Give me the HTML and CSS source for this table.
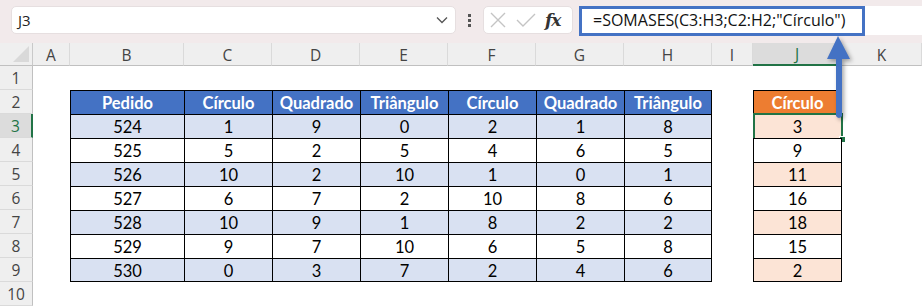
FILE: index.html
```html
<!DOCTYPE html>
<html lang="pt">
<head>
<meta charset="utf-8">
<title>SOMASES</title>
<link rel="stylesheet" href="styles.css">
</head>
<body>
<div class="toolbar">
  <div class="namebox">
    <span class="ref">J3</span>
    <svg class="chev" width="12" height="8" viewBox="0 0 12 8"><path d="M1 1.5 L6 6.5 L11 1.5" fill="none" stroke="#555" stroke-width="1.3"/></svg>
  </div>
  <div class="dots"><i></i><i></i><i></i></div>
  <div class="fxbox">
    <svg width="18" height="18" viewBox="0 0 18 18"><path d="M2 2 L16 16 M16 2 L2 16" stroke="#c4c4c4" stroke-width="1.4" fill="none"/></svg>
    <svg width="20" height="18" viewBox="0 0 20 18"><path d="M1 9 L7 15 L19 3" stroke="#c4c4c4" stroke-width="1.4" fill="none"/></svg>
    <span class="fx">fx</span>
  </div>
  <div class="formulaarea">
    <div class="formula">=SOMASES(C3:H3;C2:H2;"Círculo")</div>
  </div>
</div>

<div class="sheet">
  <div class="corner"><span class="tri"></span></div>
  <div class="ch">A</div><div class="ch">B</div><div class="ch">C</div><div class="ch">D</div><div class="ch">E</div><div class="ch">F</div><div class="ch">G</div><div class="ch">H</div><div class="ch">I</div><div class="ch sel">J</div><div class="ch">K</div>

  <div class="rh">1</div>

  <div class="rh">2</div>
  <div class="c th cb">Pedido</div><div class="c th">Círculo</div><div class="c th">Quadrado</div><div class="c th">Triângulo</div><div class="c th">Círculo</div><div class="c th">Quadrado</div><div class="c th lc">Triângulo</div>
  <div class="c oh cj lc">Círculo</div>

  <div class="rh sel">3</div>
  <div class="c b cb">524</div><div class="c b">1</div><div class="c b">9</div><div class="c b">0</div><div class="c b">2</div><div class="c b">1</div><div class="c b lc">8</div>
  <div class="c o cj lc active">3<span class="selbox"></span><span class="handle"></span></div>

  <div class="rh">4</div>
  <div class="c cb">525</div><div class="c">5</div><div class="c">2</div><div class="c">5</div><div class="c">4</div><div class="c">6</div><div class="c lc">5</div>
  <div class="c cj lc">9</div>

  <div class="rh">5</div>
  <div class="c b cb">526</div><div class="c b">10</div><div class="c b">2</div><div class="c b">10</div><div class="c b">1</div><div class="c b">0</div><div class="c b lc">1</div>
  <div class="c o cj lc">11</div>

  <div class="rh">6</div>
  <div class="c cb">527</div><div class="c">6</div><div class="c">7</div><div class="c">2</div><div class="c">10</div><div class="c">8</div><div class="c lc">6</div>
  <div class="c cj lc">16</div>

  <div class="rh">7</div>
  <div class="c b cb">528</div><div class="c b">10</div><div class="c b">9</div><div class="c b">1</div><div class="c b">8</div><div class="c b">2</div><div class="c b lc">2</div>
  <div class="c o cj lc">18</div>

  <div class="rh">8</div>
  <div class="c cb">529</div><div class="c">9</div><div class="c">7</div><div class="c">10</div><div class="c">6</div><div class="c">5</div><div class="c lc">8</div>
  <div class="c cj lc">15</div>

  <div class="rh">9</div>
  <div class="c b cb lr">530</div><div class="c b lr">0</div><div class="c b lr">3</div><div class="c b lr">7</div><div class="c b lr">2</div><div class="c b lr">4</div><div class="c b lc lr">6</div>
  <div class="c o cj lc lr">2</div>

  <div class="rh">10</div>
</div>

<svg class="arrow" width="40" height="100" viewBox="0 0 40 100">
  <path d="M12 2 L24 25 L16 25 L16 82 Q13 86 10 82 L10 25 L1 25 Z" fill="#4472c4"/>
</svg>
</body>
</html>
```

FILE: styles.css
```css
* { box-sizing: border-box; }
html, body { margin: 0; padding: 0; background: #fff; }
body { width: 922px; height: 308px; overflow: hidden; position: relative; font-family: "Open Sans", "Noto Sans", sans-serif; }

.toolbar {
  height: 43px;
  background: #f2eaeb;
  display: flex;
  align-items: flex-start;
  padding-top: 6px;
  padding-left: 11px;
}
.namebox {
  width: 445px;
  height: 28px;
  background: #fff;
  border-radius: 5px;
  border: 1px solid #e6dfe0;
  display: flex;
  align-items: center;
  justify-content: space-between;
  padding: 0 7px 0 6px;
}
.namebox .ref { font-size: 15px; color: #222; }
.dots {
  width: 27px;
  height: 28px;
  display: flex;
  flex-direction: column;
  align-items: center;
  justify-content: center;
  gap: 2px;
}
.dots i { display: block; width: 3px; height: 3px; background: #555; }
.fxbox {
  width: 90px;
  height: 28px;
  background: #fff;
  border-radius: 5px;
  border: 1px solid #e6dfe0;
  display: flex;
  align-items: center;
  gap: 9px;
  padding-left: 5px;
}
.fx {
  font-family: "DejaVu Serif", "Liberation Serif", serif;
  font-style: italic;
  font-weight: bold;
  font-size: 17px;
  color: #333;
  letter-spacing: -1px;
}
.formulaarea {
  flex: 1;
  height: 29px;
  background: #fff;
  margin-left: 6px;
}
.formula {
  width: 286px;
  height: 30px;
  border: 3px solid #4472c4;
  font-size: 16px;
  color: #111;
  padding-left: 11px;
  line-height: 23px;
  white-space: nowrap;
}

.sheet {
  display: grid;
  grid-template-columns: 33px 37px 114px 88px 88px 88px 88px 88px 88px 41px 89px 1fr;
  grid-template-rows: 23px;
  grid-auto-rows: 24px;
}
.corner {
  background: #efefef;
  border-right: 1px solid #c9c9c9;
  border-bottom: 1px solid #c0c0c0;
  position: relative;
}
.corner .tri {
  position: absolute;
  right: 3px;
  bottom: 3px;
  width: 0; height: 0;
  border-left: 16px solid transparent;
  border-bottom: 16px solid #d9d9d9;
}
.ch {
  background: #efefef;
  border-right: 1px solid #dadada;
  border-bottom: 1px solid #c0c0c0;
  color: #444;
  font-size: 15.5px;
  display: flex;
  align-items: center;
  justify-content: center;
  padding-top: 1px;
}
.ch.sel {
  background: #dcdcdc;
  border-bottom: 2px solid #217346;
  color: #217346;
}
.rh {
  grid-column: 1;
  background: #efefef;
  border-right: 1px solid #c0c0c0;
  border-bottom: 1px solid #dadada;
  color: #444;
  font-size: 15.5px;
  display: flex;
  align-items: center;
  justify-content: center;
}
.rh.sel {
  background: #dcdcdc;
  border-right: 2px solid #217346;
  color: #217346;
}

.c {
  font-family: "Lato", "Liberation Sans", sans-serif;
  font-size: 16.5px;
  color: #000;
  border-left: 1px solid #000;
  border-top: 1px solid #000;
  display: flex;
  align-items: center;
  justify-content: center;
  background: #fff;
  position: relative;
  padding-top: 1px;
}
.cb { grid-column: 3; }
.cj { grid-column: 11; }
.lc { border-right: 1px solid #000; }
.lr { border-bottom: 1px solid #000; }
.th { background: #4472c4; color: #fff; font-weight: bold; }
.oh { background: #ed7d31; color: #fff; font-weight: bold; }
.b { background: #d9e1f2; }
.o { background: #fce4d6; }

.selbox {
  position: absolute;
  left: -1px; top: -2px; right: -2px; bottom: -2px;
  border: 2px solid #217346;
}
.handle {
  position: absolute;
  right: -5px;
  bottom: -5px;
  width: 7px;
  height: 7px;
  background: #217346;
  border: 1px solid #fff;
}

.arrow {
  position: absolute;
  left: 826px;
  top: 34px;
  filter: drop-shadow(2px 2px 2px rgba(0,0,0,0.35));
}
```
